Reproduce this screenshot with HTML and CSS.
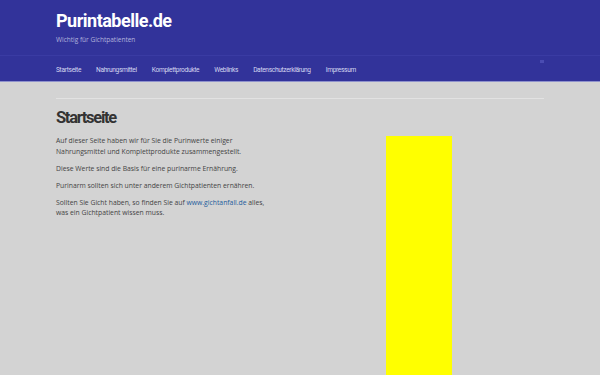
FILE: index.html
```html
<!DOCTYPE html>
<html lang="de">
<head>
<meta charset="utf-8">
<title>Purintabelle.de</title>
<link rel="stylesheet" href="styles.css">
</head>
<body>
<header class="site-header">
  <div class="branding">
    <div class="site-title">Purintabelle.de</div>
    <div class="site-desc">Wichtig für Gichtpatienten</div>
  </div>
  <nav class="main-nav">
    <ul class="menu">
      <li>Startseite</li>
      <li>Nahrungsmittel</li>
      <li>Komplettprodukte</li>
      <li>Weblinks</li>
      <li>Datenschutzerklärung</li>
      <li>Impressum</li>
    </ul>
    <span class="nav-dot"></span>
  </nav>
</header>
<main class="content">
  <div class="rule"></div>
  <div class="columns">
    <article class="entry">
      <h1 class="entry-title">Startseite</h1>
      <p>Auf dieser Seite haben wir für Sie die Purinwerte einiger Nahrungsmittel und Komplettprodukte zusammengestellt.</p>
      <p>Diese Werte sind die Basis für eine purinarme Ernährung.</p>
      <p>Purinarm sollten sich unter anderem Gichtpatienten ernähren.</p>
      <p>Sollten Sie Gicht haben, so finden Sie auf <a href="#">www.gichtanfall.de</a> alles, was ein Gichtpatient wissen muss.</p>
    </article>
    <aside class="sidebar">
      <div class="ad"></div>
    </aside>
  </div>
</main>
</body>
</html>
```
FILE: styles.css
```css
* { box-sizing: border-box; }
html, body { margin: 0; padding: 0; }
body {
  background: #d3d3d3;
  font-family: "Open Sans", "DejaVu Sans", sans-serif;
  height: 375px;
  overflow: hidden;
}
.site-header {
  background: #32339a;
  border-bottom: 1px solid #8f92cc;
}
.branding {
  padding: 11px 56px 0;
  height: 56px;
  border-bottom: 1px solid #3a3ba3;
}
.site-title {
  font-family: "Roboto", sans-serif;
  font-weight: 700;
  font-size: 18px;
  line-height: 20px;
  color: #ffffff;
  letter-spacing: -0.5px;
}
.site-desc {
  margin-top: 4px;
  font-size: 6.5px;
  line-height: 9px;
  color: #b3b4dc;
}
.main-nav {
  position: relative;
  height: 25px;
  padding: 2px 56px 0;
  display: flex;
  align-items: center;
}
.menu {
  list-style: none;
  margin: 0;
  padding: 0;
  display: flex;
  gap: 15px;
}
.menu li {
  font-family: "Roboto", sans-serif;
  font-size: 6.6px;
  color: #d6d7f0;
  letter-spacing: -0.33px;
}
.nav-dot {
  position: absolute;
  right: 56px;
  top: 4px;
  width: 4px;
  height: 3px;
  background: #4a4cb2;
}
.content {
  padding: 16px 56px 0;
}
.rule {
  height: 1px;
  background: #e2e2e2;
}
.columns {
  display: flex;
}
.entry {
  width: 220px;
  color: #444;
}
.entry-title {
  font-family: "Roboto", sans-serif;
  font-weight: 700;
  font-size: 16.5px;
  line-height: 20px;
  letter-spacing: -1.3px;
  color: #333;
  margin: 9px 0 8px;
}
.entry p {
  font-size: 6.8px;
  line-height: 10.5px;
  margin: 0 0 6.5px;
}
.entry a {
  color: #1d5c9c;
  text-decoration: none;
}
.sidebar {
  margin-left: 110px;
  padding-top: 37px;
}
.ad {
  width: 66px;
  height: 250px;
  background: #ffff00;
}
```
